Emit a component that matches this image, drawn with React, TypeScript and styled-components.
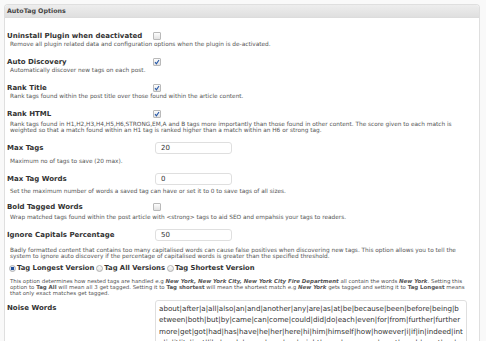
import React from "react";
import styled, { createGlobalStyle } from "styled-components";

const GlobalStyle = createGlobalStyle`
  html, body {
    margin: 0;
    padding: 0;
    background: #f9f9f9;
    overflow: hidden;
  }
  body {
    font-family: "DejaVu Sans", Verdana, sans-serif;
    color: #333;
  }
`;

const Panel = styled.div`
  margin: 4px 6px 0 4px;
  height: 337px;
  border: 1px solid #dfdfdf;
  border-bottom: none;
  border-radius: 4px 4px 0 0;
  background: #fff;
  overflow: hidden;
`;

const PanelHead = styled.h3`
  margin: 0;
  height: 12px;
  padding: 0 2px;
  font-size: 6.3px;
  font-weight: bold;
  line-height: 12px;
  color: #464646;
  background: linear-gradient(#ededed, #dfdfdf);
  border-bottom: 1px solid #dcdcdc;
`;

const Body = styled.div`
  padding: 12px 10px 0 2px;
`;

const Option = styled.div<{ $gap?: number }>`
  margin-bottom: ${(p) => p.$gap ?? 9}px;
`;

const Row = styled.div<{ $h?: number; $top?: boolean }>`
  display: flex;
  align-items: ${(p) => (p.$top ? "flex-start" : "center")};
  height: ${(p) => (p.$h ? `${p.$h}px` : "auto")};
`;

const Label = styled.label<{ $pad?: number }>`
  width: 146px;
  flex: none;
  padding-top: ${(p) => p.$pad ?? 0}px;
  font-size: 7px;
  line-height: 8px;
  font-weight: bold;
  color: #333;
`;

const Desc = styled.p<{ $top?: number; $w?: number; $size?: number }>`
  margin: ${(p) => p.$top ?? 0}px 0 0 3px;
  max-width: ${(p) => p.$w ?? 456}px;
  font-size: ${(p) => p.$size ?? 5.8}px;
  line-height: 6px;
  color: #555;
`;

const Box = styled.span`
  width: 6px;
  height: 6px;
  border: 1px solid #b9b9b9;
  border-radius: 1px;
  background: linear-gradient(#fdfdfd, #e2e2e2);
  display: flex;
  align-items: center;
  justify-content: center;
`;

const TextInput = styled.input`
  box-sizing: border-box;
  width: 77px;
  height: 12px;
  margin-left: 2px;
  padding: 0 5px;
  border: 1px solid #dfdfdf;
  border-radius: 3px;
  font-family: "DejaVu Sans", Verdana, sans-serif;
  font-size: 7px;
  color: #333;
  background: #fff;
  outline: none;
`;

const RadioRow = styled.div`
  display: flex;
  align-items: center;
  gap: 2px;
  height: 12px;
  padding-left: 2px;
`;

const RadioItem = styled.span`
  display: flex;
  align-items: center;
  gap: 1px;
  font-size: 6.8px;
  font-weight: bold;
  color: #333;
`;

const Dot = styled.span<{ $on?: boolean }>`
  width: 5px;
  height: 5px;
  border: 1px solid #b0b0b0;
  border-radius: 50%;
  background: ${(p) =>
    p.$on
      ? "radial-gradient(circle, #1f4f9c 0 1.6px, #dfe6f0 2px)"
      : "linear-gradient(#fdfdfd, #e0e0e0)"};
`;

const NoiseArea = styled.textarea`
  box-sizing: border-box;
  width: 312px;
  height: 80px;
  margin-left: 2px;
  padding: 2px 3px;
  border: 1px solid #dfdfdf;
  border-radius: 3px;
  font-family: "DejaVu Sans", Verdana, sans-serif;
  font-size: 7.15px;
  line-height: 11.3px;
  color: #333;
  word-break: break-all;
  resize: none;
  overflow: hidden;
  outline: none;
`;

const Check = ({ on }: { on?: boolean }) => (
  <Box>
    {on && (
      <svg width="6" height="6" viewBox="0 0 6 6">
        <path d="M1 3.2 L2.4 4.8 L5 1" fill="none" stroke="#2557a7" strokeWidth="1.1" />
      </svg>
    )}
  </Box>
);

const noise =
  "about|after|a|all|also|an|and|another|any|are|as|at|be|because|been|before|being|between|both|but|by|came|can|come|could|did|do|each|even|for|from|further|furthermore|get|got|had|has|have|he|her|here|hi|him|himself|how|however|i|if|in|indeed|into|is|it|its|just|like|made|many|may|me|might|more|moreover|most|much|must|my|never|not|now|of|on|only|or|other|our|out|over|said|same|see|should|since|some|still|such|take|than|that|the|their|them|then|there|therefore|these|they|this|those|through|thus|to|too|under|up|very|was|way|we|well|were|what|when|where|which|while|who|will|with|would|you|your";

export default function App() {
  return (
    <>
      <GlobalStyle />
      <Panel>
        <PanelHead>AutoTag Options</PanelHead>
        <Body>
          <Option>
            <Row $h={11}>
              <Label>Uninstall Plugin when deactivated</Label>
              <Check />
            </Row>
            <Desc>Remove all plugin related data and configuration options when the plugin is de-activated.</Desc>
          </Option>
          <Option>
            <Row $h={11}>
              <Label>Auto Discovery</Label>
              <Check on />
            </Row>
            <Desc>Automatically discover new tags on each post.</Desc>
          </Option>
          <Option>
            <Row $h={11}>
              <Label>Rank Title</Label>
              <Check on />
            </Row>
            <Desc>Rank tags found within the post title over those found within the article content.</Desc>
          </Option>
          <Option $gap={8}>
            <Row $h={11}>
              <Label>Rank HTML</Label>
              <Check on />
            </Row>
            <Desc $top={2}>
              Rank tags found in H1,H2,H3,H4,H5,H6,STRONG,EM,A and B tags more importantly than those found in other
              content. The score given to each match is weighted so that a match found within an H1 tag is ranked
              higher than a match within an H6 or strong tag.
            </Desc>
          </Option>
          <Option $gap={8}>
            <Row $h={13}>
              <Label>Max Tags</Label>
              <TextInput defaultValue="20" />
            </Row>
            <Desc $top={4}>Maximum no of tags to save (20 max).</Desc>
          </Option>
          <Option $gap={7}>
            <Row $h={13}>
              <Label>Max Tag Words</Label>
              <TextInput defaultValue="0" />
            </Row>
            <Desc $top={3}>
              Set the maximum number of words a saved tag can have or set it to 0 to save tags of all sizes.
            </Desc>
          </Option>
          <Option $gap={8}>
            <Row $h={11}>
              <Label>Bold Tagged Words</Label>
              <Check />
            </Row>
            <Desc $top={2}>
              Wrap matched tags found within the post article with &lt;strong&gt; tags to aid SEO and empahsis your
              tags to readers.
            </Desc>
          </Option>
          <Option $gap={3}>
            <Row $h={13}>
              <Label>Ignore Capitals Percentage</Label>
              <TextInput defaultValue="50" />
            </Row>
            <Desc $top={6}>
              Badly formatted content that contains too many capitalised words can cause false positives when
              discovering new tags. This option allows you to tell the system to ignore auto discovery if the
              percentage of capitalised words is greater than the specified threshold.
            </Desc>
          </Option>
          <Option $gap={4}>
            <RadioRow>
              <RadioItem>
                <Dot $on />
                Tag Longest Version
              </RadioItem>
              <RadioItem>
                <Dot />
                Tag All Versions
              </RadioItem>
              <RadioItem>
                <Dot />
                Tag Shortest Version
              </RadioItem>
            </RadioRow>
            <Desc $top={4} $w={460} $size={5.45}>
              This option determines how nested tags are handled e.g{" "}
              <b>
                <i>New York, New York City, New York City Fire Department</i>
              </b>{" "}
              all contain the words{" "}
              <b>
                <i>New York</i>
              </b>
              . Setting this option to <b>Tag All</b> will mean all 3 get tagged. Setting it to <b>Tag shortest</b>{" "}
              will mean the shortest match e.g{" "}
              <b>
                <i>New York</i>
              </b>{" "}
              gets tagged and setting it to <b>Tag Longest</b> means that only exact matches get tagged.
            </Desc>
          </Option>
          <Option>
            <Row $top>
              <Label $pad={4}>Noise Words</Label>
              <NoiseArea defaultValue={noise} />
            </Row>
          </Option>
        </Body>
      </Panel>
    </>
  );
}
